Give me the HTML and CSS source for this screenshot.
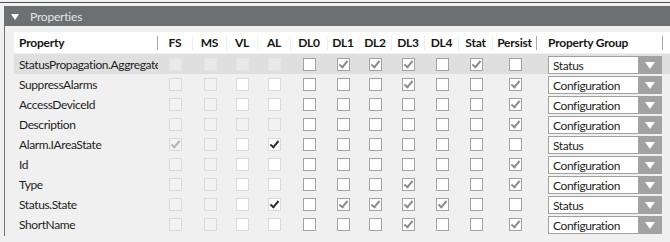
FILE: index.html
```html
<!DOCTYPE html>
<html lang="en">
<head>
    <meta charset="UTF-8">
    <title>Properties</title>
    <link rel="stylesheet" href="styles.css">
</head>
<body>

    <div class="topbar"></div>

    <div class="panel">
        <div class="panel-head">
            <svg class="caret" width="8" height="6" viewBox="0 0 8 6"><polygon points="0,0 8,0 4,6" fill="#ffffff"/></svg>
            <span>Properties</span>
        </div>

        <div class="panel-body">
            <!-- Cabecera de columnas -->
            <div class="line hdr">
                <div class="hc name bar">Property</div>
                <div class="hc">FS</div>
                <div class="hc">MS</div>
                <div class="hc">VL</div>
                <div class="hc">AL</div>
                <div class="hc">DL0</div>
                <div class="hc">DL1</div>
                <div class="hc">DL2</div>
                <div class="hc">DL3</div>
                <div class="hc">DL4</div>
                <div class="hc">Stat</div>
                <div class="hc bar">Persist</div>
                <div class="hc group bar">Property Group</div>
            </div>

            <div class="line sel">
                <div class="name">StatusPropagation.Aggregate</div>
                <div class="c"><span class="cb dis"></span></div>
                <div class="c"><span class="cb dis"></span></div>
                <div class="c"><span class="cb dis"></span></div>
                <div class="c"><span class="cb dis"></span></div>
                <div class="c"><span class="cb"></span></div>
                <div class="c"><span class="cb on"></span></div>
                <div class="c"><span class="cb on"></span></div>
                <div class="c"><span class="cb on"></span></div>
                <div class="c"><span class="cb"></span></div>
                <div class="c"><span class="cb on"></span></div>
                <div class="c"><span class="cb"></span></div>
                <div class="group"><div class="select">Status<span class="btn"></span></div></div>
            </div>

            <div class="line">
                <div class="name">SuppressAlarms</div>
                <div class="c"><span class="cb dis"></span></div>
                <div class="c"><span class="cb dis"></span></div>
                <div class="c"><span class="cb ro"></span></div>
                <div class="c"><span class="cb ro"></span></div>
                <div class="c"><span class="cb"></span></div>
                <div class="c"><span class="cb"></span></div>
                <div class="c"><span class="cb"></span></div>
                <div class="c"><span class="cb on"></span></div>
                <div class="c"><span class="cb"></span></div>
                <div class="c"><span class="cb"></span></div>
                <div class="c"><span class="cb on"></span></div>
                <div class="group"><div class="select">Configuration<span class="btn"></span></div></div>
            </div>

            <div class="line">
                <div class="name">AccessDeviceId</div>
                <div class="c"><span class="cb dis"></span></div>
                <div class="c"><span class="cb dis"></span></div>
                <div class="c"><span class="cb ro"></span></div>
                <div class="c"><span class="cb ro"></span></div>
                <div class="c"><span class="cb"></span></div>
                <div class="c"><span class="cb"></span></div>
                <div class="c"><span class="cb"></span></div>
                <div class="c"><span class="cb"></span></div>
                <div class="c"><span class="cb"></span></div>
                <div class="c"><span class="cb"></span></div>
                <div class="c"><span class="cb on"></span></div>
                <div class="group"><div class="select">Configuration<span class="btn"></span></div></div>
            </div>

            <div class="line">
                <div class="name">Description</div>
                <div class="c"><span class="cb dis"></span></div>
                <div class="c"><span class="cb dis"></span></div>
                <div class="c"><span class="cb dis"></span></div>
                <div class="c"><span class="cb dis"></span></div>
                <div class="c"><span class="cb"></span></div>
                <div class="c"><span class="cb"></span></div>
                <div class="c"><span class="cb"></span></div>
                <div class="c"><span class="cb"></span></div>
                <div class="c"><span class="cb"></span></div>
                <div class="c"><span class="cb"></span></div>
                <div class="c"><span class="cb on"></span></div>
                <div class="group"><div class="select">Configuration<span class="btn"></span></div></div>
            </div>

            <div class="line">
                <div class="name">Alarm.IAreaState</div>
                <div class="c"><span class="cb dis on"></span></div>
                <div class="c"><span class="cb dis"></span></div>
                <div class="c"><span class="cb ro"></span></div>
                <div class="c"><span class="cb ro on"></span></div>
                <div class="c"><span class="cb"></span></div>
                <div class="c"><span class="cb"></span></div>
                <div class="c"><span class="cb"></span></div>
                <div class="c"><span class="cb"></span></div>
                <div class="c"><span class="cb"></span></div>
                <div class="c"><span class="cb"></span></div>
                <div class="c"><span class="cb"></span></div>
                <div class="group"><div class="select">Status<span class="btn"></span></div></div>
            </div>

            <div class="line">
                <div class="name">Id</div>
                <div class="c"><span class="cb dis"></span></div>
                <div class="c"><span class="cb dis"></span></div>
                <div class="c"><span class="cb ro"></span></div>
                <div class="c"><span class="cb ro"></span></div>
                <div class="c"><span class="cb"></span></div>
                <div class="c"><span class="cb"></span></div>
                <div class="c"><span class="cb"></span></div>
                <div class="c"><span class="cb"></span></div>
                <div class="c"><span class="cb"></span></div>
                <div class="c"><span class="cb"></span></div>
                <div class="c"><span class="cb on"></span></div>
                <div class="group"><div class="select">Configuration<span class="btn"></span></div></div>
            </div>

            <div class="line">
                <div class="name">Type</div>
                <div class="c"><span class="cb dis"></span></div>
                <div class="c"><span class="cb dis"></span></div>
                <div class="c"><span class="cb ro"></span></div>
                <div class="c"><span class="cb ro"></span></div>
                <div class="c"><span class="cb"></span></div>
                <div class="c"><span class="cb"></span></div>
                <div class="c"><span class="cb"></span></div>
                <div class="c"><span class="cb on"></span></div>
                <div class="c"><span class="cb"></span></div>
                <div class="c"><span class="cb"></span></div>
                <div class="c"><span class="cb on"></span></div>
                <div class="group"><div class="select">Configuration<span class="btn"></span></div></div>
            </div>

            <div class="line">
                <div class="name">Status.State</div>
                <div class="c"><span class="cb dis"></span></div>
                <div class="c"><span class="cb dis"></span></div>
                <div class="c"><span class="cb ro"></span></div>
                <div class="c"><span class="cb ro on"></span></div>
                <div class="c"><span class="cb"></span></div>
                <div class="c"><span class="cb on"></span></div>
                <div class="c"><span class="cb on"></span></div>
                <div class="c"><span class="cb on"></span></div>
                <div class="c"><span class="cb on"></span></div>
                <div class="c"><span class="cb"></span></div>
                <div class="c"><span class="cb"></span></div>
                <div class="group"><div class="select">Status<span class="btn"></span></div></div>
            </div>

            <div class="line">
                <div class="name">ShortName</div>
                <div class="c"><span class="cb dis"></span></div>
                <div class="c"><span class="cb dis"></span></div>
                <div class="c"><span class="cb ro"></span></div>
                <div class="c"><span class="cb ro"></span></div>
                <div class="c"><span class="cb"></span></div>
                <div class="c"><span class="cb"></span></div>
                <div class="c"><span class="cb"></span></div>
                <div class="c"><span class="cb on"></span></div>
                <div class="c"><span class="cb"></span></div>
                <div class="c"><span class="cb"></span></div>
                <div class="c"><span class="cb on"></span></div>
                <div class="group"><div class="select">Configuration<span class="btn"></span></div></div>
            </div>
        </div>
    </div>

</body>
</html>
```

FILE: styles.css
```css
/* Estilos generales */
body {
    margin: 0;
    background-color: #f0f0f0;
    font-family: "Lato", "Liberation Sans", sans-serif;
    font-size: 12px;
    letter-spacing: -0.4px;
    color: #1e1e1e;
    overflow: hidden;
}

.topbar {
    height: 2px;
    border-bottom: 1px solid #4e4e4e;
    margin-bottom: 3px;
}

.panel {
    margin-left: 4px;
}

.panel-head {
    height: 20px;
    background-color: #6d7073;
    color: #e4e4e4;
    display: flex;
    align-items: center;
    padding-left: 7px;
    letter-spacing: -0.2px;
}

.caret {
    margin-right: 11px;
    margin-top: 1px;
}

.panel-body {
    border-left: 1px solid #727272;
    padding: 6px 0 0 9px;
    height: 210px;
    box-sizing: border-box;
}

/* Filas de la tabla */
.line {
    display: grid;
    grid-template-columns: 144px 35px 34px 31px 33px 37px 31px 33px 33px 34px 34px 44px 128px;
    height: 20px;
    align-items: center;
}

.line .name {
    padding-left: 5px;
    white-space: nowrap;
    overflow: hidden;
}

.line.sel {
    background-color: #dfdfdf;
}

.hdr {
    background-color: #ffffff;
    height: 14px;
    padding: 4px 0 3px 0;
    margin-bottom: 1px;
    align-items: stretch;
    font-weight: bold;
    letter-spacing: -0.2px;
    color: #151515;
}

.hc {
    text-align: center;
    line-height: 14px;
    border-right: 1px solid #efefef;
}

.hc.name {
    text-align: left;
}

.hc.bar {
    border-right-color: #a9a9a9;
}

.hc.group {
    text-align: left;
    padding-left: 11px;
    margin-right: 2px;
}

.c {
    display: flex;
    justify-content: center;
}

/* Casillas */
.cb {
    width: 11px;
    height: 11px;
    border: 1px solid #a3a3a3;
    background-color: #ffffff;
    position: relative;
}

.cb.dis {
    border-color: #dadada;
    background-color: #f2f2f2;
}

.sel .cb.dis {
    border-color: #e4e4e4;
    background-color: #e9e9e9;
}

.cb.ro {
    border-color: #dadada;
}

.cb.on::after {
    content: "";
    position: absolute;
    left: 3px;
    top: 0px;
    width: 3px;
    height: 7px;
    border-right: 2px solid #8c8c8c;
    border-bottom: 2px solid #8c8c8c;
    transform: rotate(40deg);
}

.cb.ro.on::after {
    border-color: #303030;
}

.cb.dis.on::after {
    border-color: #b4b4b4;
}

/* Desplegable */
.group {
    padding-left: 11px;
    align-self: end;
}

.select {
    width: 108px;
    height: 16px;
    border: 1px solid #a0a0a0;
    background-color: #ffffff;
    display: flex;
    align-items: center;
    padding-left: 4px;
    position: relative;
}

.btn {
    position: absolute;
    right: -1px;
    top: -1px;
    width: 24px;
    height: 18px;
    background-color: #a2a2a2;
}

.btn::after {
    content: "";
    position: absolute;
    left: 7px;
    top: 6px;
    border-left: 5px solid transparent;
    border-right: 5px solid transparent;
    border-top: 7px solid #ffffff;
}
```
